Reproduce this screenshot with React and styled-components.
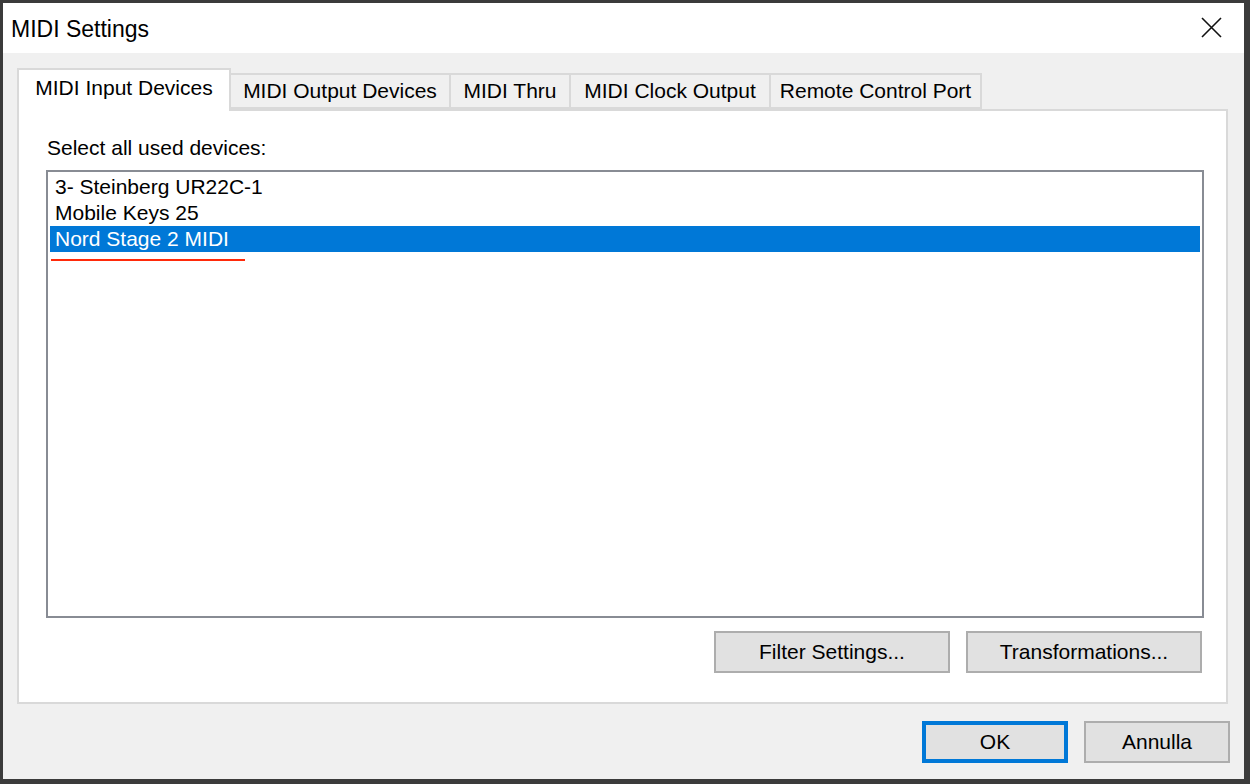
import React, { useState } from 'react';
import styled, { createGlobalStyle } from 'styled-components';

const GlobalStyle = createGlobalStyle`
	html, body {
		margin: 0;
		padding: 0;
		background: #3b3b3b;
	}
	body {
		width: 1250px;
		height: 784px;
		overflow: hidden;
		font-family: 'Liberation Sans', Arial, sans-serif;
	}
`;

const Dialog = styled.div`
	margin: 3px 6px 5px 3px;
	width: 1241px;
	height: 776px;
	background: #f0f0f0;
	display: flex;
	flex-direction: column;
`;

const TitleBar = styled.div`
	height: 50px;
	background: #ffffff;
	display: flex;
	align-items: center;
	justify-content: space-between;
	padding: 0 22px 0 8px;
	flex-shrink: 0;
`;

const Title = styled.span`
	font-family: 'Liberation Sans', Arial, sans-serif;
	font-size: 23px;
	color: #000;
	margin-top: 2px;
`;

const CloseButton = styled.button`
	border: none;
	background: transparent;
	padding: 0;
	width: 22px;
	height: 22px;
	display: flex;
	align-items: center;
	justify-content: center;
	margin-top: -2px;
	cursor: pointer;
`;

const Body = styled.div`
	flex: 1;
	display: flex;
	flex-direction: column;
	padding: 15px 16px 0 14px;
`;

const TabStrip = styled.div`
	display: flex;
	align-items: flex-end;
	height: 41px;
	position: relative;
	z-index: 1;
`;

const Tab = styled.button`
	box-sizing: border-box;
	width: ${(props) => props.width}px;
	height: ${(props) => (props.active ? 43 : 36)}px;
	margin-bottom: ${(props) => (props.active ? -2 : 0)}px;
	background: ${(props) => (props.active ? '#ffffff' : '#f0f0f0')};
	border: 2px solid #d9d9d9;
	border-bottom: ${(props) => (props.active ? 'none' : '2px solid #d9d9d9')};
	border-left: ${(props) => (props.first || props.active ? '2px solid #d9d9d9' : 'none')};
	font-family: 'Liberation Sans', Arial, sans-serif;
	font-size: 21px;
	color: #000;
	padding: 0 0 ${(props) => (props.active ? 6 : 0)}px;
	text-align: center;
	cursor: default;
	white-space: nowrap;
`;

const Panel = styled.div`
	box-sizing: border-box;
	width: 1211px;
	height: 595px;
	background: #ffffff;
	border: 2px solid #d9d9d9;
	padding: 25px 22px 0 27px;
	display: flex;
	flex-direction: column;
`;

const Label = styled.div`
	font-size: 21px;
	color: #000;
	height: 34px;
	padding-left: 1px;
`;

const ListBox = styled.div`
	box-sizing: border-box;
	height: 448px;
	border: 2px solid #888c94;
	background: #fff;
	padding: 2px;
	position: relative;
`;

const Item = styled.div`
	height: 26px;
	line-height: 26px;
	padding-left: 5px;
	font-size: 21px;
	color: ${(props) => (props.selected ? '#ffffff' : '#000000')};
	background: ${(props) => (props.selected ? '#0078d7' : 'transparent')};
	white-space: nowrap;
	cursor: default;
`;

const Mark = styled.div`
	position: absolute;
	left: 3px;
	top: 87px;
	width: 194px;
	height: 2px;
	background: #ff2a0a;
`;

const ButtonRow = styled.div`
	display: flex;
	justify-content: flex-end;
	gap: ${(props) => props.gap}px;
	margin-top: ${(props) => props.top}px;
	margin-right: ${(props) => props.right}px;
`;

const Button = styled.button`
	box-sizing: border-box;
	width: ${(props) => props.width}px;
	height: 42px;
	background: #e1e1e1;
	border: ${(props) => (props.default ? '4px solid #0078d7' : '2px solid #adadad')};
	font-family: 'Liberation Sans', Arial, sans-serif;
	font-size: 21px;
	color: #000;
	padding: 0;
	cursor: default;
`;

const tabs = [
	{ name: 'MIDI Input Devices', width: 214 },
	{ name: 'MIDI Output Devices', width: 220 },
	{ name: 'MIDI Thru', width: 120 },
	{ name: 'MIDI Clock Output', width: 200 },
	{ name: 'Remote Control Port', width: 211 }
];

const devices = ['3- Steinberg UR22C-1', 'Mobile Keys 25', 'Nord Stage 2 MIDI'];

const CloseIcon = () => (
	<svg width="21" height="21" viewBox="0 0 21 21">
		<path d="M1 1 L20 20 M20 1 L1 20" stroke="#111" strokeWidth="1.6" fill="none" />
	</svg>
);

const App = () => {
	const [tab, setTab] = useState(0);
	const [selected, setSelected] = useState(2);
	return (
		<>
			<GlobalStyle />
			<Dialog>
				<TitleBar>
					<Title>MIDI Settings</Title>
					<CloseButton>
						<CloseIcon />
					</CloseButton>
				</TitleBar>
				<Body>
					<TabStrip>
						{tabs.map((t, i) => (
							<Tab
								key={t.name}
								width={t.width}
								active={i === tab}
								first={i === 0}
								onClick={() => setTab(i)}
							>
								{t.name}
							</Tab>
						))}
					</TabStrip>
					<Panel>
						<Label>Select all used devices:</Label>
						<ListBox>
							{devices.map((d, i) => (
								<Item key={d} selected={i === selected} onClick={() => setSelected(i)}>
									{d}
								</Item>
							))}
							<Mark />
						</ListBox>
						<ButtonRow gap={16} top={13} right={2}>
							<Button width={236}>Filter Settings...</Button>
							<Button width={236}>Transformations...</Button>
						</ButtonRow>
					</Panel>
					<ButtonRow gap={16} top={17} right={-2}>
						<Button width={146} default>
							OK
						</Button>
						<Button width={146}>Annulla</Button>
					</ButtonRow>
				</Body>
			</Dialog>
		</>
	);
};

export default App;
